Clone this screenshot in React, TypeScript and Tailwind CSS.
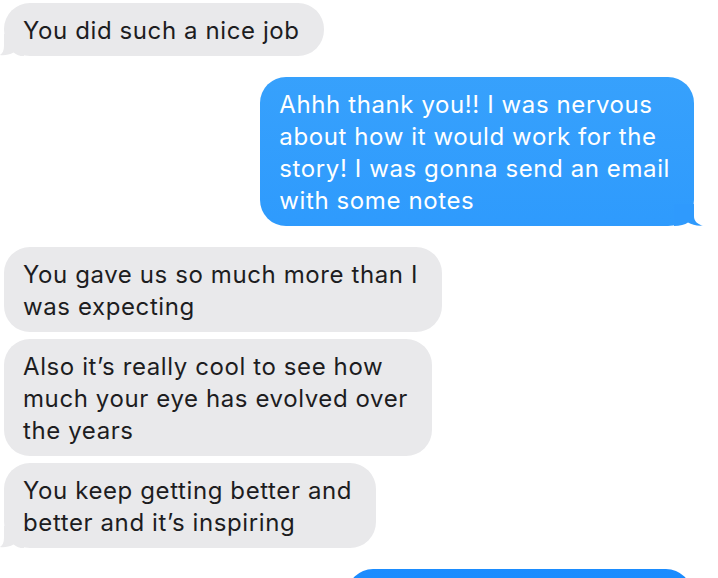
import React from "react";

const font = { fontFamily: "Inter, 'Noto Sans', sans-serif" };

function LeftTail() {
  return (
    <svg
      className="absolute bottom-0 left-[-4px]"
      width="24"
      height="22"
      viewBox="0 0 24 22"
    >
      <path
        d="M4 0 L4 12 C4 16.5 2.5 19.5 0 21 C4.5 21.6 9.5 20.6 13.5 18.4 C16.5 20.8 19.5 22 24 22 L24 0 Z"
        fill="#e9e9eb"
      />
    </svg>
  );
}

function RightTail({ color }: { color: string }) {
  return (
    <svg
      className="absolute bottom-0 right-[-9px]"
      width="29"
      height="22"
      viewBox="0 0 29 22"
    >
      <path
        d="M20 0 L20 12 C20 16.5 22.5 20 29 21.6 C23.5 22.2 18 21 14 18.6 C11 20.8 6 22 0 22 L0 0 Z"
        fill={color}
      />
    </svg>
  );
}

function Gray({
  children,
  tail,
}: {
  children: React.ReactNode;
  tail?: boolean;
}) {
  return (
    <div className="relative self-start w-fit rounded-[26px] bg-[#e9e9eb] pl-[19px] pr-[24px] pt-[12px] pb-[9px] text-[24px] leading-[32px] tracking-[0.6px] text-[#1d1d1f]">
      {tail && <LeftTail />}
      <span className="relative">{children}</span>
    </div>
  );
}

function Blue({
  children,
  tail,
  tailColor,
}: {
  children: React.ReactNode;
  tail?: boolean;
  tailColor: string;
}) {
  return (
    <div className="relative self-end w-fit rounded-[26px] bg-fixed bg-[linear-gradient(to_bottom,#3ba4fc,#1b8cfe)] pl-[19px] pr-[24px] pt-[12px] pb-[9px] text-[24px] leading-[32px] tracking-[0.6px] text-white">
      {tail && <RightTail color={tailColor} />}
      <span className="relative">{children}</span>
    </div>
  );
}

export default function App() {
  return (
    <div
      className="h-[578px] w-[718px] overflow-hidden bg-white pt-[3px] pl-[4px] pr-[24px]"
      style={font}
    >
      <div className="flex flex-col">
        <Gray tail>You did such a nice job</Gray>
        <div className="mt-[21px] flex flex-col">
          <Blue tail tailColor="#2f9afd">
            Ahhh thank you!! I was nervous
            <br />
            about how it would work for the
            <br />
            story! I was gonna send an email
            <br />
            with some notes
          </Blue>
        </div>
        <div className="mt-[21px] flex flex-col gap-[7px]">
          <Gray>
            You gave us so much more than I
            <br />
            was expecting
          </Gray>
          <Gray>
            Also it’s really cool to see how
            <br />
            much your eye has evolved over
            <br />
            the years
          </Gray>
          <Gray tail>
            You keep getting better and
            <br />
            better and it’s inspiring
          </Gray>
        </div>
        <div className="mt-[21px] flex flex-col">
          <div className="self-end mr-[2px] h-[53px] w-[345px] rounded-[26px] bg-fixed bg-[linear-gradient(to_bottom,#3ba4fc,#1b8cfe)]" />
        </div>
      </div>
    </div>
  );
}
